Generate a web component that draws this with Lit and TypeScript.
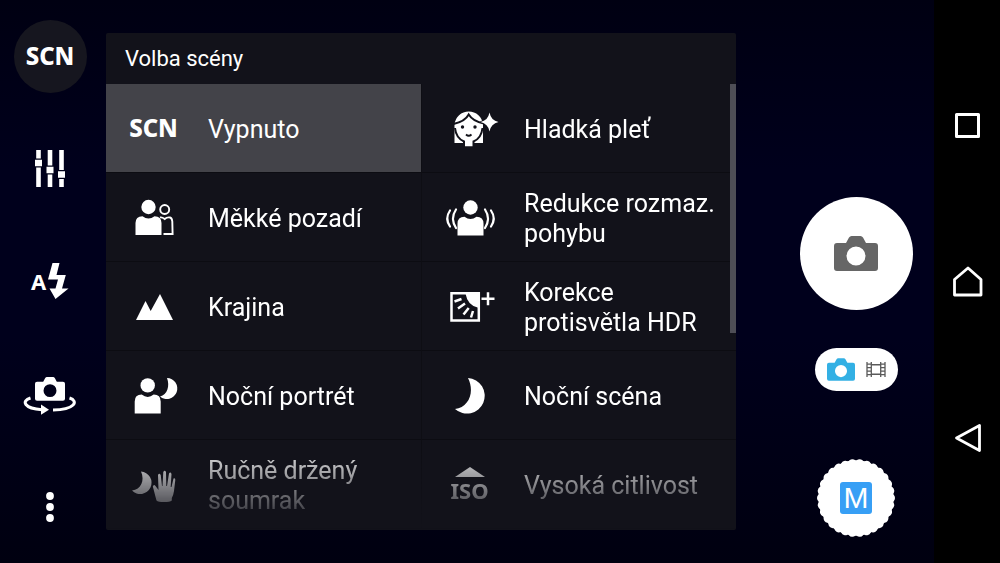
import { LitElement, html, svg, css, nothing } from "lit";
import { customElement, state } from "lit/decorators.js";
import { classMap } from "lit/directives/class-map.js";

const person = (x: number, y: number) => svg`
  <circle cx=${x} cy=${y} r="7.2" fill="currentColor"/>
  <path transform="translate(${x} ${y})" fill="currentColor"
    d="M-13 28V16q0-6.500 7-6.800Q-3 11.500 0 11.500T6 9.200Q13 9.500 13 16V28z"/>`;

const moon = svg`<path fill="currentColor" d="M28 13A17.800 17.800 0 1 1 15 44C29 42 35 27 28 13z"/>`;

const cameraShape = svg`<path fill="currentColor" fill-rule="evenodd"
  d="M3 7H12L15 1.500Q16 0 17.500 0H26.500Q28 0 29 1.500L32 7H41Q44 7 44 10V32Q44 35 41 35H3Q0 35 0 32V10Q0 7 3 7zM22 10.500A9.500 9.500 0 1 0 22 29.500A9.500 9.500 0 1 0 22 10.500z"/>`;

const pictures: Record<string, unknown> = {
  skin: svg`
    <path fill="currentColor" d="M14.500 45V26.500A14.300 14.300 0 0 1 43 26.500V45H33V48.300H24.500V45z"/>
    <g fill="none" stroke="#12121a" stroke-width="2">
      <path d="M13.500 26Q25 23.500 28.700 16.500Q33 23.500 44 25.500"/>
      <path d="M15 30Q16 40 24 43.500V49.500M42.500 30Q41.500 40 33.500 43.500V49.500"/>
      <path d="M26 36.500Q28.700 39 31.500 36.500" stroke-width="1.800"/>
    </g>
    <circle cx="22.500" cy="29" r="1.700" fill="#12121a"/><circle cx="35" cy="29" r="1.700" fill="#12121a"/>
    <path fill="currentColor" stroke="#12121a" stroke-width="1.400" paint-order="stroke"
      d="M49.500 14.500Q51 22.500 58.500 24Q51 25.500 49.500 33.500Q48 25.500 40.500 24Q48 22.500 49.500 14.500z"/>`,
  soft: svg`${person(24.5, 20)}
    <g fill="none" stroke="currentColor" stroke-width="1.900">
      <circle cx="40.700" cy="22.500" r="4.500"/>
      <path d="M36 30.500Q38 30 40.700 32Q43 30 46 30.500Q48 31 48.300 34.500L48.600 47H39.500"/>
    </g>`,
  land: svg`<path fill="currentColor" d="M12 44L21.500 25L26.700 35L36 18L49 44z"/>`,
  nightPortrait: svg`${person(23.7, 20.4)}
    <path fill="currentColor" d="M43 13A10.500 10.500 0 1 1 36 31.500C43.500 29.500 46 21 43 13z"/>`,
  twilight: svg`
    <path fill="currentColor" d="M17 17.500A11.300 11.300 0 1 1 8 36.500C17 35.500 21 26.500 17 17.500z"/>
    <path fill="currentColor" d="M32.500 46.500Q31.500 43 30 37L28.800 32.500Q29.800 29.700 31.500 32L34.500 36L34 21Q35.300 18.500 36.700 21L38 32H38.500L39.300 18Q40.700 15.700 42 18L42.300 32H43L45 19.500Q46.500 17.500 47.500 20L46.700 33H47.500L49.500 24.500Q51.300 23.500 51.300 26L50 37Q49.500 41 47.800 44V46.500Q46 48 40 48T32.500 46.500z"/>`,
  motion: svg`${person(30.5, 20.5)}
    <g fill="none" stroke="currentColor" stroke-width="2.200" stroke-linecap="round">
      <path d="M16 22.500Q10 31.500 16 41M10 23.500Q4.500 31.500 10 39.500M45 22.500Q51 31.500 45 41M51 23.500Q56.500 31.500 51 39.500"/>
    </g>`,
  hdr: svg`
    <g fill="none" stroke="currentColor" stroke-width="2.500">
      <path d="M11.500 17.300H38.800V44.600H11.500z"/>
      <path d="M14.500 25.500L21.500 23M18 32.500L25 27.500M23.500 38.500L28.700 32M31 41.500L33 35" />
      <path d="M41.500 22.800H54.500M48 16.300V29.300"/>
    </g>
    <path fill="currentColor" d="M25.500 17.500H39V32Q27.500 30 25.500 17.500z"/>`,
  night: moon,
  sliders: svg`
    <path stroke="currentColor" stroke-width="4.600" d="M18.500 11V48M30 11V48M41.500 11V48"/>
    <path stroke="#000018" stroke-width="9" d="M14 24H23M25.500 31H34.500M37 35.500H46"/>
    <path stroke="currentColor" stroke-width="6.400" d="M15 24H22M26.500 31H33.500M38 35.500H45"/>`,
  bolt: svg`<path fill="currentColor" d="M32.500 12H39.500L36.500 24H45.800L42 37.500H48.500L35.500 48L29.500 37.500H35.500L38 28.500H28z"/>`,
  flip: svg`
    <g transform="translate(15 13) scale(.682)">${cameraShape}</g>
    <g fill="none" stroke="currentColor" stroke-width="3">
      <path d="M10.500 34C1 37 4 44.500 22 45.700M49.500 34C59 37 55 45.500 33 46"/>
    </g>
    <path fill="currentColor" d="M21 40.500L29 45.800L21 50.800z"/>`,
  dots: svg`<g fill="currentColor"><circle cx="30" cy="19" r="3.900"/><circle cx="30" cy="30" r="3.900"/><circle cx="30" cy="41" r="3.900"/></g>`,
};

const icon = (name: string) => html`<svg class="icon" viewBox="0 0 60 60" aria-hidden="true">${pictures[name]}</svg>`;

interface Scene { id: string; label: string }

const scenes: Scene[] = [
  { id: "scn", label: "Vypnuto" },
  { id: "skin", label: "Hladká pleť" },
  { id: "soft", label: "Měkké pozadí" },
  { id: "motion", label: "Redukce rozmaz. pohybu" },
  { id: "land", label: "Krajina" },
  { id: "hdr", label: "Korekce protisvětla HDR" },
  { id: "nightPortrait", label: "Noční portrét" },
  { id: "night", label: "Noční scéna" },
  { id: "twilight", label: "Ručně držený soumrak" },
  { id: "iso", label: "Vysoká citlivost" },
];

const sceneIcon = (id: string) => {
  if (id === "scn") return html`<span class="glyph">SCN</span>`;
  if (id === "iso")
    return html`<span class="iso"><svg width="30" height="10" viewBox="0 0 30 10" aria-hidden="true"><path fill="currentColor" d="M0 10L15 0L30 10z"/></svg><span class="iso-text">ISO</span></span>`;
  return icon(id);
};

@customElement("app-root")
export class AppRoot extends LitElement {
  @state() private selected = "scn";

  static styles = css`
    :host {
      display: grid;
      grid-template-columns: 100px minmax(0, 1fr) 156px 66px;
      min-height: 100vh;
      background: linear-gradient(#000012, #00001c 30%, #00001c 60%, #000010);
      color: #fff;
      font-family: Roboto, "Noto Sans", sans-serif;
    }
    button {
      appearance: none;
      border: 0;
      margin: 0;
      padding: 0;
      background: none;
      color: inherit;
      font: inherit;
      text-align: left;
      cursor: pointer;
    }
    svg { display: block; }
    .icon { width: 60px; height: 60px; }
    .rail {
      display: grid;
      grid-template-rows: repeat(5, 1fr);
      place-items: center;
    }
    .round {
      width: 73px;
      height: 73px;
      border-radius: 50%;
      background: #16161f;
      text-align: center;
    }
    .glyph {
      font-family: "Noto Sans", sans-serif;
      font-weight: 800;
      font-size: 24px;
      line-height: 30px;
    }
    .flash { display: grid; }
    .flash > * { grid-area: 1 / 1; }
    .auto {
      place-self: center start;
      padding-left: 11px;
      font: 700 22px/30px "Noto Sans", sans-serif;
    }
    .panel {
      margin: 33px 42px 33px 6px;
      background: #12121a;
      border-radius: 2px;
      overflow: hidden;
    }
    h1 {
      margin: 0;
      padding: 0 19px;
      font-size: 22px;
      font-weight: 400;
      line-height: 51px;
    }
    .scroller {
      display: grid;
      position: relative;
    }
    .list {
      display: grid;
      grid-template-columns: 1fr 1fr;
      grid-auto-rows: minmax(89px, auto);
      margin: 0;
      padding: 0;
      list-style: none;
      mask-image: linear-gradient(#000 calc(100% - 90px), transparent);
    }
    .list li {
      display: grid;
      border-bottom: 1px solid #0c0c12;
    }
    .list li:nth-child(even) { border-left: 1px solid #0e0e14; }
    .scene {
      display: grid;
      grid-template-columns: 95px minmax(0, 1fr);
      column-gap: 7px;
      align-items: center;
      padding-right: 10px;
      font-size: 25px;
      line-height: 30px;
    }
    .scene.on { background: #434349; }
    .mark { display: grid; justify-items: center; }
    .label { padding-top: 4px; }
    .iso { display: grid; justify-items: center; row-gap: 2px; }
    .iso-text { font: 700 22px/22px "Noto Sans", sans-serif; }
    .thumb {
      position: absolute;
      top: 0;
      right: 0;
      width: 6px;
      height: 56%;
      background: #4e4e56;
    }
    .controls {
      display: flex;
      flex-direction: column;
      align-items: center;
      justify-content: flex-end;
      padding-bottom: 26px;
    }
    .shutter {
      display: grid;
      place-items: center;
      width: 113px;
      height: 113px;
      border-radius: 50%;
      background: #fff;
      color: #666;
    }
    .mode {
      display: flex;
      align-items: center;
      justify-content: center;
      gap: 11px;
      width: 83px;
      height: 43px;
      margin: 38px 0 68px;
      border-radius: 22px;
      background: #fff;
    }
    .photo { color: #33b0e4; }
    .film { color: #5a5a5a; }
    .manual { display: grid; place-items: center; }
    .manual > * { grid-area: 1 / 1; }
    .letter {
      width: 32px;
      height: 32px;
      border-radius: 3px;
      background: #379ff5;
      color: #fff;
      font-family: "Liberation Sans", sans-serif;
      font-size: 30px;
      font-weight: 400;
      line-height: 32px;
      text-align: center;
    }
    .nav {
      display: grid;
      grid-template-rows: repeat(3, 1fr);
      place-items: center;
      padding: 47px 0;
      background: #000;
    }
  `;

  render() {
    return html`
      <div class="rail">
        <button class="round"><span class="glyph">SCN</span></button>
        <button aria-label="Nastavení">${icon("sliders")}</button>
        <button class="flash">${icon("bolt")}<span class="auto">A</span></button>
        <button aria-label="Přepnout fotoaparát">${icon("flip")}</button>
        <button aria-label="Další">${icon("dots")}</button>
      </div>
      <section class="panel">
        <h1>Volba scény</h1>
        <div class="scroller">
          <ul class="list">
            ${scenes.map((s) => html`
              <li>
                <button
                  class=${classMap({ scene: true, on: s.id === this.selected })}
                  aria-current=${s.id === this.selected ? "true" : nothing}
                  @click=${() => (this.selected = s.id)}
                ><span class="mark">${sceneIcon(s.id)}</span><span class="label">${s.label}</span></button>
              </li>`)}
          </ul>
          <div class="thumb"></div>
        </div>
      </section>
      <div class="controls">
        <button class="shutter" aria-label="Vyfotit">
          <svg width="44" height="35" viewBox="0 0 44 35">${cameraShape}</svg>
        </button>
        <button class="mode" aria-label="Foto nebo video">
          <svg class="photo" width="28" height="23" viewBox="0 0 44 35">${cameraShape}</svg>
          <svg class="film" width="20" height="15" viewBox="0 0 20 15" fill="none" stroke="currentColor">
            <path d="M1 0V15M5.300 0V15M14.700 0V15M19 0V15" stroke-width="1.300"/>
            <path d="M5 2.700H15M5 12.300H15" stroke-width="1.600"/>
            <path d="M1 2.200H5M1 5.700H5M1 9.200H5M1 12.700H5M15 2.200H19M15 5.700H19M15 9.200H19M15 12.700H19" stroke-width="1.300"/>
          </svg>
        </button>
        <button class="manual">
          <svg width="78" height="78" viewBox="0 0 78 78" aria-hidden="true">
            <circle cx="39" cy="39" r="37.700" fill="#fff"/>
            <circle cx="39" cy="39" r="34.500" fill="none" stroke="#fff" stroke-width="9"
              stroke-linecap="round" pathLength="30" stroke-dasharray="0.001 0.999"/>
          </svg>
          <span class="letter">M</span>
        </button>
      </div>
      <nav class="nav">
        <button aria-label="Přehled">
          <svg width="40" height="40" viewBox="0 0 40 40"><rect x="9.500" y="9.500" width="22" height="22" fill="none" stroke="#fff" stroke-width="3" stroke-linejoin="round"/></svg>
        </button>
        <button aria-label="Domů">
          <svg width="40" height="40" viewBox="0 0 40 40"><path d="M7.500 18.500L21 7L34 18.500V34H7.500z" fill="none" stroke="#fff" stroke-width="2.800" stroke-linejoin="round"/></svg>
        </button>
        <button aria-label="Zpět">
          <svg width="40" height="40" viewBox="0 0 40 40"><path d="M9.500 20L32.500 7.500V32.500z" fill="none" stroke="#fff" stroke-width="2.800" stroke-linejoin="round"/></svg>
        </button>
      </nav>
    `;
  }
}
